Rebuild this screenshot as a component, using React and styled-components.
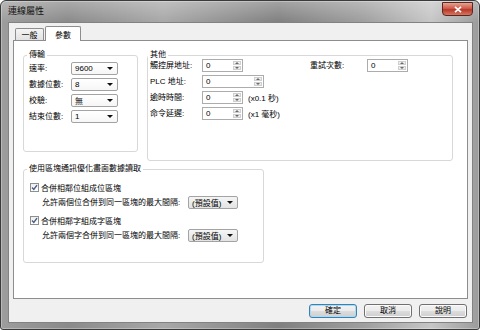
import React from "react";
import styled, { createGlobalStyle } from "styled-components";

const GlobalStyle = createGlobalStyle`
  html, body {
    margin: 0;
    padding: 0;
    background: #ffffff;
  }
  body {
    width: 480px;
    height: 330px;
    overflow: hidden;
    font-family: "Liberation Sans", "Noto Sans CJK TC", sans-serif;
    color: #000;
  }
`;

const Window = styled.div`
  width: 480px;
  height: 330px;
  box-sizing: border-box;
  border: 1px solid #3b3b3b;
  border-radius: 6px 6px 3px 3px;
  padding: 0 6px 6px 7px;
  display: flex;
  flex-direction: column;
  background:
    linear-gradient(180deg, rgba(255, 255, 255, 0.28), rgba(255, 255, 255, 0) 21px),
    linear-gradient(90deg, #9d9d9d 0%, #8a8a8a 14%, #a8a8a8 34%, #808080 58%, #9f9f9f 76%, #c6c6c6 90%, #9b9b9b 100%);
  box-shadow: inset 0 0 0 1px rgba(255, 255, 255, 0.3);
`;

const TitleBar = styled.div`
  height: 21px;
  flex: none;
  display: flex;
  justify-content: space-between;
  align-items: flex-start;
`;

const TitleText = styled.span`
  font-size: 9px;
  line-height: 21px;
  color: #111;
`;

const CloseButton = styled.div`
  width: 31px;
  height: 14px;
  margin-top: 1px;
  box-sizing: border-box;
  border: 1px solid #5a2620;
  border-radius: 0 0 4px 4px;
  background: linear-gradient(180deg, #e6a393 0%, #cf5a48 45%, #b8392a 55%, #d47762 100%);
  display: flex;
  align-items: center;
  justify-content: center;
`;

const Client = styled.div`
  flex: 1;
  background: #f0f0f0;
  border: 1px solid #828282;
  padding: 0 4px 4px 4px;
  display: flex;
  flex-direction: column;
`;

const TabStrip = styled.div`
  height: 18px;
  flex: none;
  display: flex;
  align-items: flex-end;
  padding-left: 2px;
`;

const Tab = styled.div`
  box-sizing: border-box;
  width: ${(p) => (p.$active ? 36 : 29)}px;
  height: ${(p) => (p.$active ? 15 : 12)}px;
  margin-left: ${(p) => (p.$active ? 1 : 0)}px;
  margin-bottom: ${(p) => (p.$active ? 0 : 1)}px;
  border: 1px solid #8d8d8d;
  border-bottom: none;
  border-radius: 2px 2px 0 0;
  background: ${(p) => (p.$active ? "#ffffff" : "linear-gradient(180deg, #f4f4f4, #e2e2e2)")};
  position: relative;
  z-index: ${(p) => (p.$active ? 1 : 0)};
  display: flex;
  align-items: center;
  justify-content: center;
  font-size: 8px;
`;

const Panel = styled.div`
  height: 259px;
  flex: none;
  box-sizing: border-box;
  margin-top: -1px;
  border: 1px solid #8d8d8d;
  background: #ffffff;
  padding: 10px 0 0 9px;
`;

const TopRow = styled.div`
  display: flex;
  gap: 9px;
  align-items: flex-start;
`;

const Group = styled.fieldset`
  margin: ${(p) => p.$top || 0}px 0 0 0;
  padding: 0 0 0 ${(p) => p.$pad}px;
  width: ${(p) => p.$w}px;
  height: ${(p) => p.$h}px;
  min-width: 0;
  box-sizing: border-box;
  border: 1px solid #d8d8d8;
  border-radius: 3px;
`;

const Legend = styled.legend`
  padding: 0 2px;
  margin-left: -2px;
  font-size: 8px;
  line-height: 8px;
`;

const FormGrid = styled.div`
  margin-top: 3px;
  display: grid;
  grid-template-columns: 42px 47px;
  grid-auto-rows: 13px;
  row-gap: 3px;
  align-items: center;
`;

const Label = styled.span`
  font-size: 8px;
  line-height: 13px;
  white-space: nowrap;
  width: ${(p) => (p.$w ? `${p.$w}px` : "auto")};
  flex: none;
`;

const Combo = styled.div`
  width: ${(p) => p.$w}px;
  height: 13px;
  box-sizing: border-box;
  border: 1px solid #a3a3a3;
  border-radius: 2px;
  background: ${(p) => (p.$button ? "linear-gradient(180deg, #f5f5f5, #e3e3e3)" : "linear-gradient(180deg, #ffffff, #f6f6f6)")};
  padding: 0 4px 0 3px;
  display: flex;
  align-items: center;
  justify-content: space-between;
  font-size: 8px;
  flex: none;
`;

const Arrow = styled.span`
  width: 0;
  height: 0;
  border-left: 3px solid transparent;
  border-right: 3px solid transparent;
  border-top: 3px solid #111;
`;

const OtherBody = styled.div`
  display: flex;
`;

const Column = styled.div`
  width: ${(p) => (p.$w ? `${p.$w}px` : "auto")};
  display: flex;
  flex-direction: column;
  gap: 3px;
`;

const Row = styled.div`
  height: 13px;
  display: flex;
  align-items: center;
`;

const SpinField = styled.div`
  width: ${(p) => p.$w}px;
  height: 13px;
  box-sizing: border-box;
  border: 1px solid #acacac;
  background: #ffffff;
  display: flex;
  flex: none;
`;

const FieldText = styled.span`
  flex: 1;
  padding-left: 3px;
  font-size: 8px;
  line-height: 11px;
`;

const SpinBox = styled.div`
  width: 10px;
  display: flex;
  flex-direction: column;
  padding: 1px;
  box-sizing: border-box;
  gap: 1px;
`;

const SpinHalf = styled.div`
  flex: 1;
  border: 1px solid #cfcfcf;
  background: linear-gradient(180deg, #f7f7f7, #e4e4e4);
  display: flex;
  align-items: center;
  justify-content: center;
  &::after {
    content: "";
    width: 0;
    height: 0;
    border-left: 2px solid transparent;
    border-right: 2px solid transparent;
    ${(p) => (p.$down ? "border-top: 2px solid #6a6a6a;" : "border-bottom: 2px solid #6a6a6a;")}
  }
`;

const Unit = styled.span`
  margin-left: 5px;
  font-size: 8px;
  white-space: nowrap;
`;

const CheckRow = styled.label`
  margin-top: ${(p) => p.$top}px;
  height: 12px;
  display: flex;
  align-items: center;
  gap: 2px;
  padding-left: 1px;
  font-size: 8px;
`;

const CheckBox = styled.span`
  width: 9px;
  height: 9px;
  box-sizing: border-box;
  border: 1px solid #8e8f8f;
  background: linear-gradient(180deg, #eeeeee, #ffffff);
  display: flex;
  align-items: center;
  justify-content: center;
`;

const SubRow = styled.div`
  margin-top: 3px;
  padding-left: 13px;
  height: 13px;
  display: flex;
  align-items: center;
`;

const ButtonRow = styled.div`
  margin-top: 5px;
  padding-right: 1px;
  display: flex;
  justify-content: flex-end;
  gap: 7px;
`;

const Button = styled.button`
  width: 48px;
  height: 14px;
  box-sizing: border-box;
  padding: 0;
  border: 1px solid ${(p) => (p.$default ? "#3c7fb1" : "#707070")};
  border-radius: 3px;
  background: linear-gradient(180deg, #f2f2f2 0%, #ebebeb 50%, #dddddd 50%, #cfcfcf 100%);
  box-shadow: ${(p) => (p.$default ? "inset 0 0 0 1px #a8dbf4" : "inset 0 0 0 1px #fbfbfb")};
  font-family: inherit;
  font-size: 8px;
  line-height: 12px;
  color: #000;
`;

const Spin = ({ w, value }) => (
  <SpinField $w={w}>
    <FieldText>{value}</FieldText>
    <SpinBox>
      <SpinHalf />
      <SpinHalf $down />
    </SpinBox>
  </SpinField>
);

const Select = ({ w, value, button }) => (
  <Combo $w={w} $button={button}>
    <span>{value}</span>
    <Arrow />
  </Combo>
);

const Check = () => (
  <CheckBox>
    <svg width="7" height="7" viewBox="0 0 7 7">
      <path d="M1 3.6 L2.8 5.4 L6 1.2" fill="none" stroke="#4a5d85" strokeWidth="1.4" />
    </svg>
  </CheckBox>
);

const transport = [
  ["速率:", "9600"],
  ["數據位數:", "8"],
  ["校驗:", "無"],
  ["結束位數:", "1"],
];

export default function App() {
  return (
    <>
      <GlobalStyle />
      <Window>
        <TitleBar>
          <TitleText>連線屬性</TitleText>
          <CloseButton>
            <svg width="8" height="7" viewBox="0 0 8 7">
              <path d="M1 0.8 L7 6.2 M7 0.8 L1 6.2" stroke="#ffffff" strokeWidth="1.7" />
            </svg>
          </CloseButton>
        </TitleBar>
        <Client>
          <TabStrip>
            <Tab>一般</Tab>
            <Tab $active>參數</Tab>
          </TabStrip>
          <Panel>
            <TopRow>
              <Group $w={115} $h={101} $pad={5}>
                <Legend>傳輸</Legend>
                <FormGrid>
                  {transport.map(([label, value]) => (
                    <React.Fragment key={label}>
                      <Label>{label}</Label>
                      <Select w={47} value={value} />
                    </React.Fragment>
                  ))}
                </FormGrid>
              </Group>
              <Group $w={306} $h={110} $pad={2}>
                <Legend>其他</Legend>
                <OtherBody>
                  <Column $w={160}>
                    <Row>
                      <Label $w={52}>觸控屏地址:</Label>
                      <Spin w={41} value="0" />
                    </Row>
                    <Row>
                      <Label $w={52}>PLC 地址:</Label>
                      <Spin w={62} value="0" />
                    </Row>
                    <Row>
                      <Label $w={52}>逾時時間:</Label>
                      <Spin w={41} value="0" />
                      <Unit>(x0.1 秒)</Unit>
                    </Row>
                    <Row>
                      <Label $w={52}>命令延遲:</Label>
                      <Spin w={41} value="0" />
                      <Unit>(x1 毫秒)</Unit>
                    </Row>
                  </Column>
                  <Column>
                    <Row>
                      <Label $w={57}>重試次數:</Label>
                      <Spin w={41} value="0" />
                    </Row>
                  </Column>
                </OtherBody>
              </Group>
            </TopRow>
            <Group $w={241} $h={98} $pad={5} $top={4}>
              <Legend>使用區塊通訊優化畫面數據讀取</Legend>
              <CheckRow $top={8}>
                <Check />
                合併相鄰位組成位區塊
              </CheckRow>
              <SubRow>
                <Label $w={146}>允許兩個位合併到同一區塊的最大間隔:</Label>
                <Select w={50} value="(預設值)" button />
              </SubRow>
              <CheckRow $top={5}>
                <Check />
                合併相鄰字組成字區塊
              </CheckRow>
              <SubRow>
                <Label $w={146}>允許兩個字合併到同一區塊的最大間隔:</Label>
                <Select w={50} value="(預設值)" button />
              </SubRow>
            </Group>
          </Panel>
          <ButtonRow>
            <Button $default>確定</Button>
            <Button>取消</Button>
            <Button>說明</Button>
          </ButtonRow>
        </Client>
      </Window>
    </>
  );
}
